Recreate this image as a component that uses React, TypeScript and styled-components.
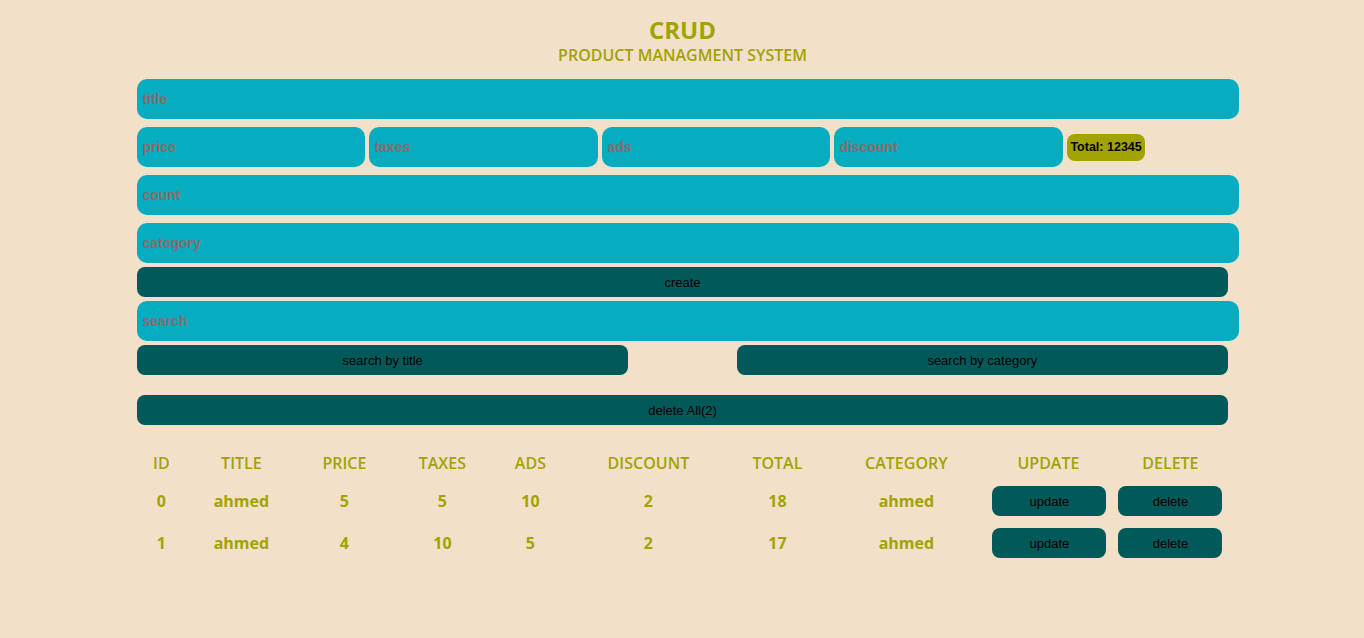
import React from "react";
import styled, { createGlobalStyle } from "styled-components";

const Global = createGlobalStyle`
  html, body { margin: 0; padding: 0; background: #f2e0c9; }
  body { font-family: "Liberation Sans", Arial, sans-serif; }
  * { box-sizing: border-box; }
`;

const Page = styled.div`
  width: 80%;
  margin: 0 auto;
  padding-top: 15px;
  padding-left: 1px;
  min-height: 638px;
`;

const Head = styled.header`
  display: flex;
  flex-direction: column;
  align-items: center;
  color: #a3a300;
  font-family: "Open Sans", "Noto Sans", sans-serif;
`;

const Title = styled.h1`
  margin: 0;
  font-size: 24px;
  font-weight: 700;
  line-height: 30px;
`;

const Sub = styled.h2`
  margin: 0;
  font-size: 16px;
  font-weight: 600;
  line-height: 20px;
`;

const Form = styled.div`
  margin-top: 14px;
  display: flex;
  flex-direction: column;
`;

const Field = styled.input<{ $w?: string }>`
  flex-shrink: 0;
  width: ${(p) => p.$w || "calc(100% + 11px)"};
  height: 40px;
  padding: 0 5px;
  border: none;
  outline: none;
  border-radius: 10px;
  background: #06acc0;
  font-family: "Liberation Sans", Arial, sans-serif;
  font-size: 14px;
  font-weight: 700;
  &::placeholder { color: #8a6a6a; }
`;

const Row = styled.div<{ $mt?: number }>`
  display: flex;
  align-items: center;
  gap: 4px;
  margin-top: ${(p) => p.$mt ?? 8}px;
`;

const Total = styled.div`
  height: 27px;
  padding: 0 3px;
  display: flex;
  align-items: center;
  border-radius: 8px;
  background: #a3a300;
  color: #000;
  font-family: "Liberation Sans", Arial, sans-serif;
  font-size: 12.5px;
  font-weight: 700;
`;

const Btn = styled.button<{ $w?: string }>`
  flex-shrink: 0;
  width: ${(p) => p.$w || "100%"};
  height: 30px;
  border: none;
  border-radius: 8px;
  background: #02595a;
  color: #000;
  font-family: "Liberation Sans", Arial, sans-serif;
  font-size: 13px;
  padding: 0;
  cursor: pointer;
`;

const Split = styled.div`
  display: flex;
  justify-content: space-between;
  margin-top: 4px;
`;

const Table = styled.table`
  margin-top: 20px;
  border-collapse: collapse;
  table-layout: fixed;
  width: 1094px;
  font-family: "Open Sans", "Noto Sans", sans-serif;
  color: #a3a300;
  text-align: center;
`;

const Th = styled.th`
  font-size: 16px;
  font-weight: 600;
  height: 35px;
  padding: 0;
  text-transform: uppercase;
`;

const Td = styled.td`
  font-size: 16px;
  font-weight: 700;
  height: 42px;
  padding: 0;
`;

const BtnCell = styled.td<{ $pl: number }>`
  height: 42px;
  padding: 0 0 0 ${(p) => p.$pl}px;
  text-align: left;
`;

const widths = [48, 112, 94, 102, 74, 162, 96, 162, 122, 122];
const headers = ["id", "title", "price", "taxes", "ads", "discount", "total", "category", "update", "delete"];
const rows = [
  { id: 0, title: "ahmed", price: 5, taxes: 5, ads: 10, discount: 2, total: 18, category: "ahmed" },
  { id: 1, title: "ahmed", price: 4, taxes: 10, ads: 5, discount: 2, total: 17, category: "ahmed" },
];

export default function App() {
  return (
    <>
      <Global />
      <Page>
        <Head>
          <Title>CRUD</Title>
          <Sub>PRODUCT MANAGMENT SYSTEM</Sub>
        </Head>
        <Form>
          <Field placeholder="title" />
          <Row>
            <Field $w="228px" placeholder="price" />
            <Field $w="229px" placeholder="taxes" />
            <Field $w="228px" placeholder="ads" />
            <Field $w="229px" placeholder="discount" />
            <Total>Total: 12345</Total>
          </Row>
          <Row><Field placeholder="count" /></Row>
          <Row><Field placeholder="category" /></Row>
          <Row $mt={4}><Btn>create</Btn></Row>
          <Row $mt={4}><Field placeholder="search" /></Row>
          <Split>
            <Btn $w="45%">search by title</Btn>
            <Btn $w="45%">search by category</Btn>
          </Split>
          <Row $mt={20}><Btn>delete All(2)</Btn></Row>
        </Form>
        <Table>
          <colgroup>
            {widths.map((w, i) => <col key={i} style={{ width: w }} />)}
          </colgroup>
          <thead>
            <tr>{headers.map((h) => <Th key={h}>{h}</Th>)}</tr>
          </thead>
          <tbody>
            {rows.map((r) => (
              <tr key={r.id}>
                <Td>{r.id}</Td>
                <Td>{r.title}</Td>
                <Td>{r.price}</Td>
                <Td>{r.taxes}</Td>
                <Td>{r.ads}</Td>
                <Td>{r.discount}</Td>
                <Td>{r.total}</Td>
                <Td>{r.category}</Td>
                <BtnCell $pl={5}><Btn $w="114px">update</Btn></BtnCell>
                <BtnCell $pl={9}><Btn $w="104px">delete</Btn></BtnCell>
              </tr>
            ))}
          </tbody>
        </Table>
      </Page>
    </>
  );
}
